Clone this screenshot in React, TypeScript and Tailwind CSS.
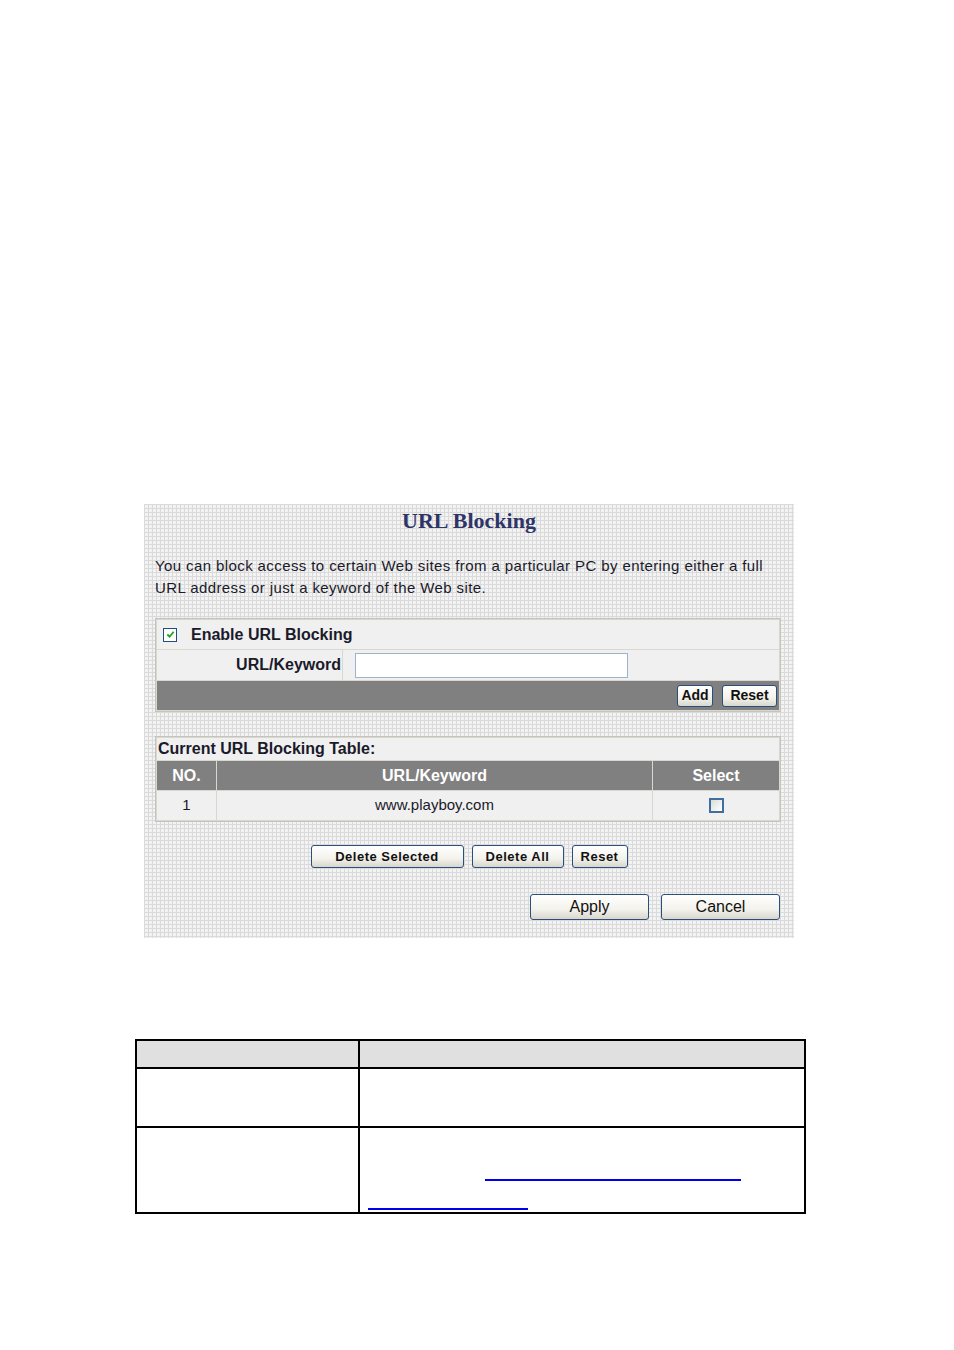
import React from "react";

// ─── Shared bits ──────────────────────────────────────────────────────────────

const grid =
  "bg-[#f3f3f3] bg-[image:linear-gradient(to_right,#dadada_1px,transparent_1px),linear-gradient(to_bottom,#dadada_1px,transparent_1px)] bg-[length:4px_4px]";

function XpButton({
  children,
  className = "",
}: {
  children: React.ReactNode;
  className?: string;
}) {
  return (
    <button
      type="button"
      className={`flex items-center justify-center rounded-[3px] border border-[#2a4f7c] bg-[linear-gradient(to_bottom,#ffffff,#f3f2ec_60%,#d8d6cc)] text-[#111] ${className}`}
    >
      {children}
    </button>
  );
}

// ─── Component ────────────────────────────────────────────────────────────────

export default function App() {
  return (
    <div
      className="w-[954px] h-[1350px] bg-white"
      style={{ fontFamily: '"Liberation Sans", Arial, sans-serif' }}
    >
      <div className="pt-[504px] pl-[144px]">
        {/* URL Blocking panel */}
        <div className={`w-[650px] h-[434px] ${grid} px-[11px] pt-[3px]`}>
          <h1
            className="text-center text-[22px] font-bold text-[#2f3466] leading-[28px]"
            style={{ fontFamily: '"Liberation Serif", "Times New Roman", serif' }}
          >
            URL Blocking
          </h1>

          <p className="mt-[20px] text-[15px] leading-[22px] text-[#1a1a2a] tracking-[0.4px] whitespace-nowrap">
            You can block access to certain Web sites from a particular PC by entering either a full
            <br />
            URL address or just a keyword of the Web site.
          </p>

          {/* Enable / add box */}
          <div className="mt-[19px] w-[626px] border border-[#c4c4bc] bg-[#d8d8d0] flex flex-col gap-px p-px">
            <div className="h-[29px] bg-[#f0f0f0] flex items-center pl-[6px]">
              <span className="w-[14px] h-[14px] border border-[#1f4f7f] bg-white flex items-center justify-center">
                <svg viewBox="0 0 10 10" className="w-[9px] h-[9px]">
                  <path d="M1.5 5 L4 7.5 L8.5 2" fill="none" stroke="#21a121" strokeWidth="2" />
                </svg>
              </span>
              <span className="ml-[14px] text-[16px] font-bold text-[#1a1a2a]">
                Enable URL Blocking
              </span>
            </div>
            <div className="h-[30px] flex gap-px">
              <div className="w-[185px] bg-[#f0f0f0] flex items-center justify-end pr-px text-[16px] font-bold text-[#1a1a2a]">
                URL/Keyword
              </div>
              <div className="flex-1 bg-[#f0f0f0] flex items-center pl-[12px]">
                <div className="w-[273px] h-[25px] bg-white border border-[#9db3cc]" />
              </div>
            </div>
            <div className="h-[29px] bg-[#808080] flex items-center justify-end gap-[9px] pr-[2px]">
              <XpButton className="w-[36px] h-[22px] text-[14px] font-bold">Add</XpButton>
              <XpButton className="w-[55px] h-[22px] text-[14px] font-bold">Reset</XpButton>
            </div>
          </div>

          {/* Current table */}
          <div className="mt-[24px] w-[626px] border border-[#c4c4bc] bg-[#d8d8d0] flex flex-col gap-px p-px">
            <div className="h-[22px] bg-[#f0f0f0] flex items-end pl-px text-[16px] font-bold text-[#1a1a2a] leading-[22px]">
              Current URL Blocking Table:
            </div>
            <div className="h-[29px] flex gap-px text-[16px] font-bold text-white">
              <div className="w-[59px] bg-[#808080] flex items-center justify-center">NO.</div>
              <div className="w-[435px] bg-[#808080] flex items-center justify-center">URL/Keyword</div>
              <div className="flex-1 bg-[#808080] flex items-center justify-center">Select</div>
            </div>
            <div className="h-[29px] flex gap-px text-[15px] text-[#1a1a2a]">
              <div className="w-[59px] bg-[#f0f0f0] flex items-center justify-center">1</div>
              <div className="w-[435px] bg-[#f0f0f0] flex items-center justify-center">www.playboy.com</div>
              <div className="flex-1 bg-[#f0f0f0] flex items-center justify-center">
                <span className="w-[15px] h-[15px] border-2 border-[#3f6f9f] bg-[linear-gradient(135deg,#dcdcd6,#ffffff)]" />
              </div>
            </div>
          </div>

          {/* Table actions */}
          <div className="mt-[23px] flex justify-center gap-[8px]">
            <XpButton className="w-[153px] h-[23px] text-[13px] font-bold tracking-[0.5px]">Delete Selected</XpButton>
            <XpButton className="w-[92px] h-[23px] text-[13px] font-bold tracking-[0.5px]">Delete All</XpButton>
            <XpButton className="w-[56px] h-[23px] text-[13px] font-bold tracking-[0.5px]">Reset</XpButton>
          </div>

          <div className="mt-[26px] flex justify-end gap-[12px] pr-[3px]">
            <XpButton className="w-[119px] h-[26px] text-[16px]">Apply</XpButton>
            <XpButton className="w-[119px] h-[26px] text-[16px]">Cancel</XpButton>
          </div>
        </div>
      </div>

      {/* Description table */}
      <div className="mt-[101px] ml-[135px] w-[671px] border-2 border-black">
        <div className="h-[28px] flex bg-[#e0e0e0] border-b-2 border-black">
          <div className="w-[223px] border-r-2 border-black" />
          <div className="flex-1" />
        </div>
        <div className="h-[59px] flex border-b-2 border-black">
          <div className="w-[223px] border-r-2 border-black" />
          <div className="flex-1" />
        </div>
        <div className="h-[84px] flex">
          <div className="w-[223px] border-r-2 border-black" />
          <div className="flex-1 pl-[8px] pt-[51px]">
            <div className="ml-[117px] w-[256px] h-[2px] bg-[#0000ee]" />
            <div className="mt-[27px] w-[160px] h-[2px] bg-[#0000ee]" />
          </div>
        </div>
      </div>
    </div>
  );
}
